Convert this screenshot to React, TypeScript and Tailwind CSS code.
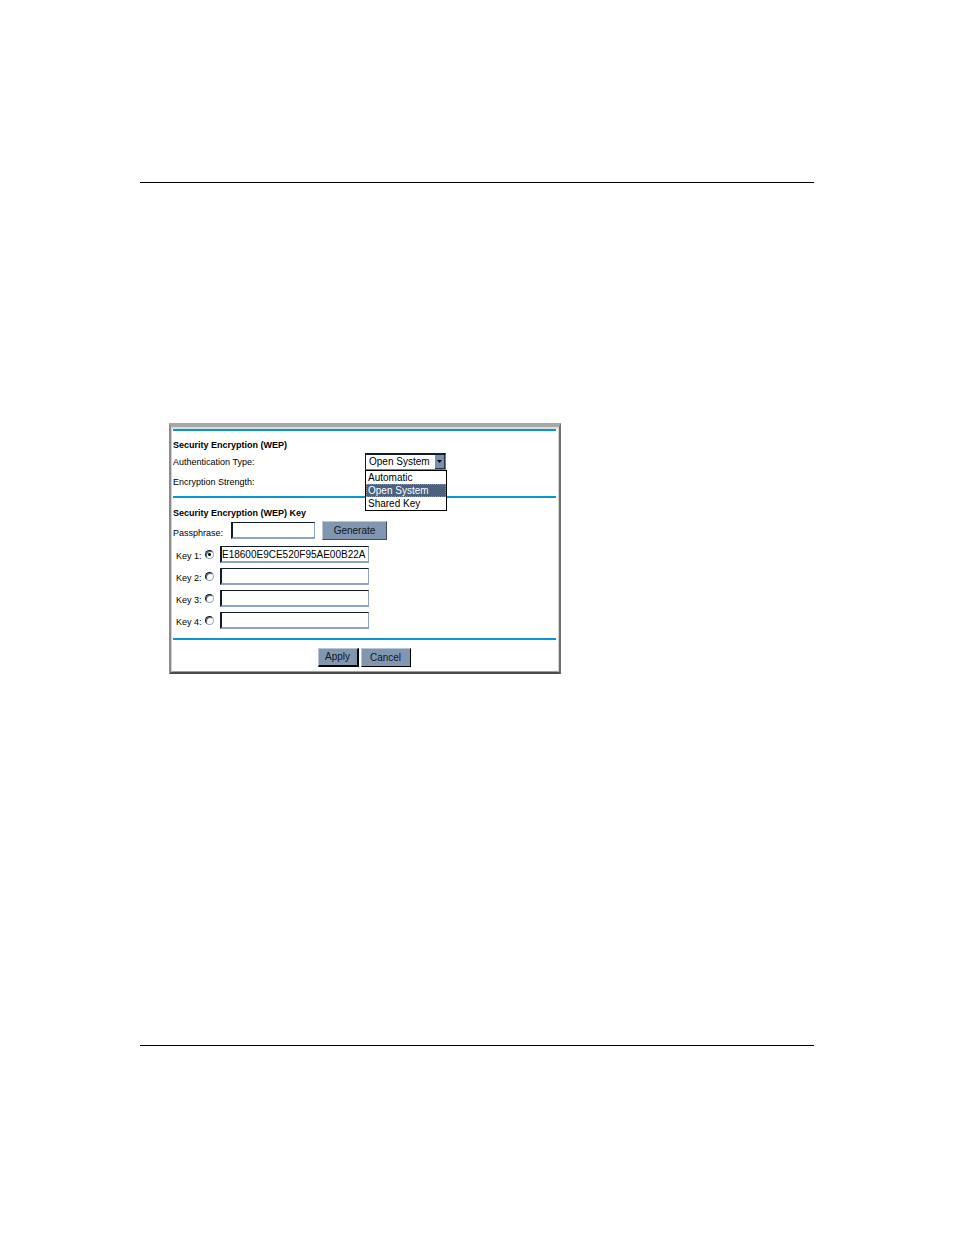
import { useState } from "react";

const authOptions = ["Automatic", "Open System", "Shared Key"];

const initialKeys = ["E18600E9CE520F95AE00B22A", "", "", ""];

const fieldClass =
  "h-[17px] border border-[#8ea5c2] border-l-2 border-l-[#101c30] border-t-[#101c30] border-b-2 bg-white text-[10px] leading-[13px] text-black outline-none";

const buttonClass =
  "h-[19px] border border-t-[#b9c6d8] border-l-[#b9c6d8] bg-[#8096b1] text-center text-[10px] leading-[16px] text-[#101820]";

function Divider() {
  return <hr className="mr-[1px] h-[2px] border-0 bg-[#0797d1]" />;
}

function AuthenticationSelect() {
  const [value, setValue] = useState("Open System");

  return (
    <div className="relative w-[81px]">
      <select
        id="auth-type"
        value={value}
        onChange={(event) => setValue(event.target.value)}
        className="block h-[17px] w-full appearance-none border border-t-2 border-[#67809f] border-t-[#101c30] border-l-[#101c30] bg-white pl-[3px] text-[10px] leading-[14px] text-black outline-none"
      >
        {authOptions.map((option) => (
          <option key={option}>{option}</option>
        ))}
      </select>
      <span className="pointer-events-none absolute top-[2px] right-[1px] flex h-[14px] w-[10px] items-center justify-center border-r border-b border-[#263549] bg-[#7890ad]">
        <svg viewBox="0 0 5 3" className="h-[3px] w-[5px]" aria-hidden="true">
          <path d="M0 0h5L2.5 3z" fill="#000" />
        </svg>
      </span>
      <ul
        role="listbox"
        aria-label="Authentication Type"
        className="absolute top-full left-0 z-10 w-[82px] border border-black bg-white text-[10px] leading-[13px]"
      >
        {authOptions.map((option) => (
          <li
            key={option}
            role="option"
            aria-selected={option === value}
            onClick={() => setValue(option)}
            className="px-[2px] text-black aria-selected:bg-[#4a6180] aria-selected:text-white aria-selected:outline aria-selected:-outline-offset-1 aria-selected:outline-dotted aria-selected:outline-[#a08f78]"
          >
            {option}
          </li>
        ))}
      </ul>
    </div>
  );
}

function KeyRow({ index, initial }: { index: number; initial: string }) {
  const name = `Key ${index}`;
  return (
    <div className="flex h-[22px] items-start">
      <label htmlFor={`use-key-${index}`} className="w-[29px] pt-1 pl-[3px] leading-3 whitespace-nowrap">
        {name}:
      </label>
      <input
        id={`use-key-${index}`}
        type="radio"
        name="active-key"
        defaultChecked={index === 1}
        className="mt-1 mr-[6px] ml-[3px] h-[9px] w-[9px] shrink-0 appearance-none rounded-full border border-[#8ea5c2] border-t-[#101820] border-l-[#101820] bg-white shadow-[inset_1px_1px_0_#5a6678] checked:bg-[radial-gradient(circle,#000_0_1px,#fff_2px)]"
      />
      <input
        type="text"
        aria-label={name}
        defaultValue={initial}
        className={`${fieldClass} w-[149px]`}
      />
    </div>
  );
}

function WepPanel() {
  return (
    <form
      onSubmit={(event) => event.preventDefault()}
      className="w-[392px] border-t-4 border-r-2 border-b-2 border-l-2 border-t-[#a8a8a8] border-r-[#707070] border-b-[#4c4c4c] border-l-[#8c8c8c] bg-white text-[9px] text-black"
    >
      <div className="border border-t-2 border-[#d0d0d0] border-t-[#dcdcdc] border-b-[#a0a0a0] px-[1px]">
        <Divider />
        <section className="flex h-[65px] flex-col pt-2">
          <h2 className="leading-3 font-bold">Security Encryption (WEP)</h2>
          <div className="flex items-start pt-[2px]">
            <label htmlFor="auth-type" className="w-[192px] pt-[3px] leading-3">
              Authentication Type:
            </label>
            <AuthenticationSelect />
          </div>
          <p className="pt-[6px] leading-3">Encryption Strength:</p>
        </section>
        <Divider />
        <section className="pt-[9px]">
          <h2 className="leading-3 font-bold">Security Encryption (WEP) Key</h2>
          <div className="flex items-start pt-[2px]">
            <label htmlFor="passphrase" className="w-[58px] pt-[6px] leading-3">
              Passphrase:
            </label>
            <input id="passphrase" type="text" className={`${fieldClass} mt-[1px] w-[84px]`} />
            <button
              type="button"
              className={`${buttonClass} ml-[7px] w-[65px] border-r-[#3b4f6a] border-b-[#3b4f6a]`}
            >
              Generate
            </button>
          </div>
          <fieldset className="h-[98px] pt-[6px]">
            {initialKeys.map((key, i) => (
              <KeyRow key={i} index={i + 1} initial={key} />
            ))}
          </fieldset>
        </section>
        <Divider />
        <div className="flex justify-center gap-[2px] pt-2 pr-[2px] pb-1">
          <button
            type="submit"
            className={`${buttonClass} w-[41px] border-r-2 border-b-2 border-r-black border-b-black`}
          >
            Apply
          </button>
          <button type="reset" className={`${buttonClass} w-[50px] border-r-black border-b-black`}>
            Cancel
          </button>
        </div>
      </div>
    </form>
  );
}

export default function App() {
  return (
    <main className="bg-white px-[140px] pt-[182px] pb-[189px] font-['Liberation_Sans',Arial,sans-serif]">
      <hr className="h-px border-0 bg-black" />
      <div className="pt-[240px] pb-[371px] pl-[29px]">
        <WepPanel />
      </div>
      <hr className="h-px border-0 bg-black" />
    </main>
  );
}
